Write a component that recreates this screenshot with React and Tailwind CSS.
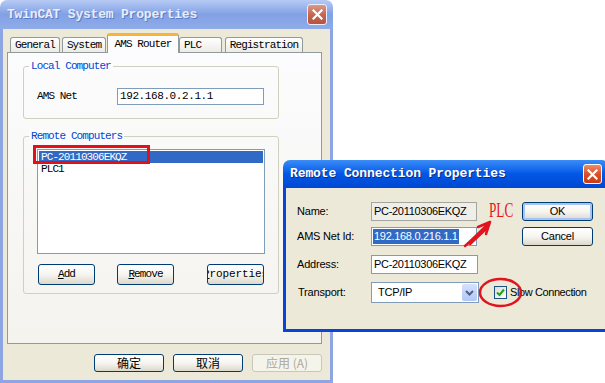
import React from "react";

const XP_BTN =
  "flex items-center justify-center rounded-[3px] border border-[#003C74] bg-linear-to-b from-white via-[#F6F5F0] to-[#DCD8CB]";

function CloseButton({ active }) {
  return (
    <div
      className={
        active
          ? "flex h-[20px] w-[19px] items-center justify-center rounded-[3px] border border-white bg-linear-to-b from-[#EE8A69] via-[#DA4F27] to-[#C63D16]"
          : "flex h-[21px] w-[20px] items-center justify-center rounded-[3px] border border-[#E8EEFB] bg-linear-to-b from-[#DB9A88] via-[#C8654F] to-[#B7533E]"
      }>
      <svg width="11" height="11" viewBox="0 0 11 11">
        <path
          d="M1.5 1.5 L9.5 9.5 M9.5 1.5 L1.5 9.5"
          stroke="white"
          strokeWidth="2.2"
          strokeLinecap="square"
        />
      </svg>
    </div>
  );
}

function MainWindow() {
  return (
    <div className="absolute left-0 top-0 flex h-[383px] w-[333px] flex-col font-['Liberation_Mono',monospace] text-[11px] tracking-[-0.9px] text-black">
      {/* title bar */}
      <div className="flex h-[29px] shrink-0 items-center justify-between rounded-t-[7px] bg-linear-to-b from-[#B6CAF4] via-[#82A1E4] to-[#8FABE9] pl-[7px] pr-[6px]">
        <span className="text-[13px] font-bold tracking-[-0.2px] text-[#E6EDFB] [text-shadow:1px_1px_0_#5C7BC4]">
          TwinCAT System Properties
        </span>
        <CloseButton />
      </div>

      <div className="flex flex-1 flex-col border-x-[3px] border-b-[3px] border-[#8DA5E3] bg-[#ECE9D8]">
        {/* tabs */}
        <div className="mt-[4px] flex h-[19px] items-end pl-[7px]">
          <div className="flex h-[15px] w-[50px] items-center justify-center rounded-t-[3px] border border-b-0 border-[#919B9C] bg-linear-to-b from-white to-[#ECEBE6]">
            General
          </div>
          <div className="ml-[2px] flex h-[15px] w-[44px] items-center justify-center rounded-t-[3px] border border-b-0 border-[#919B9C] bg-linear-to-b from-white to-[#ECEBE6]">
            System
          </div>
          <div className="relative z-10 ml-[1px] -mb-px flex h-[20px] w-[72px] items-center justify-center rounded-t-[3px] border-x border-t-[3px] border-[#919B9C] border-t-[#F7B33A] bg-[#FCFCFE]">
            AMS Router
          </div>
          <div className="flex h-[15px] w-[43px] items-center justify-start rounded-t-[3px] border border-b-0 border-[#919B9C] bg-linear-to-b from-white to-[#ECEBE6] pl-[4px]">
            PLC
          </div>
          <div className="ml-[3px] flex h-[15px] w-[78px] items-center justify-center rounded-t-[3px] border border-b-0 border-[#919B9C] bg-linear-to-b from-white to-[#ECEBE6]">
            Registration
          </div>
        </div>

        {/* tab panel */}
        <div className="ml-[4px] h-[292px] w-[315px] border border-[#919B9C] bg-linear-to-b from-[#FCFCFE] to-[#F4F3EE]">
          {/* Local Computer */}
          <div className="relative ml-[15px] mt-[13px] h-[53px] w-[256px] rounded-[3px] border border-[#D0D0BF]">
            <span className="absolute -top-[8px] left-[5px] bg-[#FCFCFE] px-[2px] leading-[14px] text-[#0046D5]">
              Local Computer
            </span>
            <div className="flex items-center pl-[13px] pt-[21px]">
              <span className="w-[80px]">AMS Net</span>
              <div className="flex h-[17px] w-[147px] items-center border border-[#7F9DB9] bg-white pl-[2px] tracking-[-0.4px]">
                192.168.0.2.1.1
              </div>
            </div>
          </div>

          {/* Remote Computers */}
          <div className="relative ml-[15px] mt-[17px] h-[158px] w-[256px] rounded-[3px] border border-[#D0D0BF]">
            <span className="absolute -top-[8px] left-[5px] bg-[#FBFBFC] px-[2px] leading-[14px] text-[#0046D5]">
              Remote Computers
            </span>
            <div className="ml-[13px] mt-[12px] h-[105px] w-[228px] border border-[#7F9DB9] bg-white p-px">
              <div className="h-[12px] bg-[#316AC5] pl-[2px] leading-[12px] text-white">
                PC-20110306EKQZ
              </div>
              <div className="h-[12px] pl-[2px] leading-[12px]">PLC1</div>
            </div>
            <div className="ml-[14px] mt-[10px] flex">
              <div className={`${XP_BTN} h-[21px] w-[57px]`}>
                <span>
                  <span className="underline">A</span>dd
                </span>
              </div>
              <div className={`${XP_BTN} ml-[22px] h-[21px] w-[57px]`}>
                <span>
                  <span className="underline">R</span>emove
                </span>
              </div>
              <div className={`${XP_BTN} ml-[33px] h-[21px] w-[57px] overflow-hidden whitespace-nowrap tracking-[-0.1px]`}>
                <span>
                  <span className="underline">P</span>roperties
                </span>
              </div>
            </div>
          </div>
        </div>

        {/* bottom buttons */}
        <div className="mt-[10px] flex justify-end gap-[9px] pr-[8px] font-['Noto_Sans_CJK_SC',sans-serif] text-[12px] tracking-normal">
          <div className={`${XP_BTN} h-[18px] w-[70px]`}>确定</div>
          <div className={`${XP_BTN} h-[18px] w-[70px]`}>取消</div>
          <div className="flex h-[18px] w-[70px] items-center justify-center rounded-[3px] border border-[#C9C7BA] bg-[#F5F4EA] text-[#ACA899]">
            应用 (A)
          </div>
        </div>
      </div>
    </div>
  );
}

function RemoteDialog() {
  return (
    <div className="absolute left-[283px] top-[160px] z-20 flex w-[326px] flex-col font-['Liberation_Sans',Arial,sans-serif] text-[11px] tracking-[-0.2px] text-black">
      <div className="flex h-[28px] items-center justify-between rounded-t-[7px] bg-linear-to-b from-[#3A8CF7] via-[#0157E5] to-[#0048D2] pl-[7px] pr-[7px]">
        <span className="font-['Liberation_Mono',monospace] text-[13px] font-bold tracking-[-0.1px] text-white [text-shadow:1px_1px_0_#0A2D8C]">
          Remote Connection Properties
        </span>
        <CloseButton active />
      </div>
      <div className="h-[144px] border-x-[3px] border-b-[3px] border-[#0845D6] bg-[#ECE9D8] pl-[11px] pt-[14px]">
        <div className="flex h-[19px] items-center">
          <span className="w-[74px]">Name:</span>
          <div className="flex h-[19px] w-[106px] items-center border border-[#A5A5A0] bg-[#EFEEE8] pl-[2px] tracking-[-0.3px]">
            PC-20110306EKQZ
          </div>
          <div className="ml-auto mr-[13px] flex h-[19px] w-[71px] items-center justify-center rounded-[3px] border border-[#003C74] bg-linear-to-b from-white via-[#F6F5F0] to-[#DCD8CB] shadow-[inset_0_0_0_2px_#A6C3F3]">
            OK
          </div>
        </div>
        <div className="mt-[6px] flex h-[19px] items-center">
          <span className="w-[74px]">AMS Net Id:</span>
          <div className="flex h-[19px] w-[106px] items-center border border-[#7F9DB9] bg-white pl-px tracking-[-0.3px]">
            <span className="bg-[#316AC5] px-px leading-[15px] text-white">192.168.0.216.1.1</span>
          </div>
          <div className={`${XP_BTN} ml-auto mr-[13px] h-[19px] w-[71px]`}>Cancel</div>
        </div>
        <div className="mt-[9px] flex h-[19px] items-center">
          <span className="w-[74px]">Address:</span>
          <div className="flex h-[19px] w-[107px] items-center border border-[#7F9DB9] bg-white pl-[2px] tracking-[-0.3px]">
            PC-20110306EKQZ
          </div>
        </div>
        <div className="mt-[8px] flex h-[21px] items-center">
          <span className="w-[74px] pl-px">Transport:</span>
          <div className="flex h-[21px] w-[108px] items-center border border-[#7F9DB9] bg-white pl-[6px]">
            <span className="flex-1">TCP/IP</span>
            <div className="mr-px flex h-[17px] w-[15px] items-center justify-center rounded-[2px] bg-linear-to-b from-[#D4E0FD] to-[#B3C7F7]">
              <svg width="9" height="6" viewBox="0 0 9 6">
                <path d="M1 1 L4.5 4.5 L8 1" fill="none" stroke="#4D6185" strokeWidth="2" />
              </svg>
            </div>
          </div>
          <div className="ml-[15px] flex h-[13px] w-[13px] items-center justify-center border border-[#1C5180] bg-linear-to-br from-[#DCDCD7] to-white">
            <svg width="9" height="9" viewBox="0 0 9 9">
              <path d="M1 4.5 L3.5 7 L8 1.5" fill="none" stroke="#21A121" strokeWidth="2" />
            </svg>
          </div>
          <span className="ml-[3px] tracking-[-0.4px]">Slow Connection</span>
        </div>
      </div>
    </div>
  );
}

export default function App() {
  return (
    <div className="relative h-[383px] w-[605px] overflow-hidden bg-white">
      <MainWindow />
      <RemoteDialog />

      {/* red annotations */}
      <div className="absolute left-[33px] top-[145px] z-30 h-[19px] w-[117px] border-[3px] border-[#E50F1A]" />
      <span className="absolute left-[489px] top-[200px] z-30 origin-left scale-x-[0.63] font-['Liberation_Serif',serif] text-[21px] leading-none text-[#E8141B]">
        PLC
      </span>
      <svg
        className="pointer-events-none absolute left-0 top-0 z-30"
        width="605"
        height="383"
        viewBox="0 0 605 383">
        <path
          d="M465 246 C472 240 481 231 490 222 M470 244 L487 228 M490 222 L478 227 M490 222 L486 234"
          fill="none"
          stroke="#E0141E"
          strokeWidth="2.5"
          strokeLinecap="round"
        />
        <ellipse
          cx="500.5"
          cy="292.5"
          rx="20.5"
          ry="13.5"
          fill="none"
          stroke="#E0141E"
          strokeWidth="2.5"
        />
      </svg>
    </div>
  );
}
